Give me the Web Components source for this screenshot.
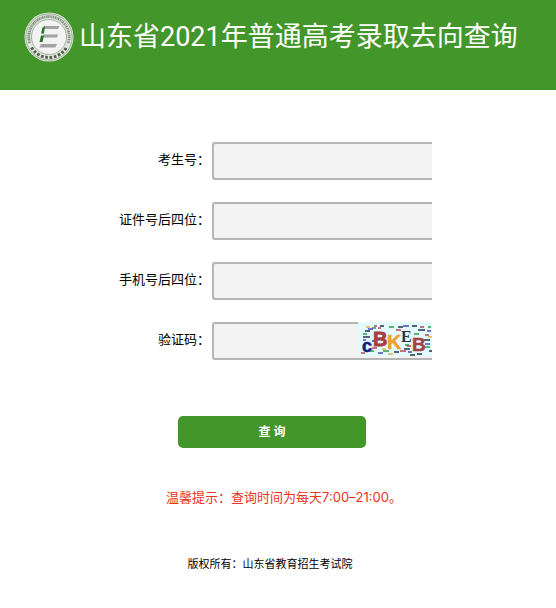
<!DOCTYPE html>
<html lang="zh-CN">
<head>
<meta charset="UTF-8">
<meta name="viewport" content="width=device-width, initial-scale=1">
<title>山东省2021年普通高考录取去向查询</title>
<style>
  body {
    margin: 0;
    background: #fff;
    color: #000;
    font-family: Inter, "Noto Sans CJK SC", sans-serif;
    font-size: 13px;
    line-height: 20px;
  }
</style>
</head>
<body>
<query-page></query-page>

<script>
class SiteLogo extends HTMLElement {
  connectedCallback() {
    this.attachShadow({ mode: 'open' });
    this.shadowRoot.innerHTML = `
      <style>
        :host {
          display: block;
          flex: none;
          width: 50px;
          height: 50px;
        }
        svg {
          display: block;
          width: 100%;
          height: 100%;
        }
      </style>
      <svg viewBox="0 0 50 50" aria-hidden="true">
        <circle cx="25" cy="25" r="24.5" fill="#dfe6dc"/>
        <circle cx="25" cy="25" r="23.2" fill="none" stroke="#8fa189" stroke-width=".8"/>
        <path d="M5.800 31A20.200 20.200 0 1 1 44.200 31" fill="none" stroke="#81917c" stroke-width="2.800" stroke-dasharray="1.300 .6 .8 .5 1.600 .7"/>
        <path d="M7.500 35.500A20.400 20.400 0 0 0 42.500 35.500" fill="none" stroke="#56604f" stroke-width="3" stroke-dasharray="2.600 1.700"/>
        <circle cx="25" cy="25" r="17.500" fill="#f3f3f3" stroke="#a5b39f" stroke-width="1"/>
        <path d="M20.500 14H35.500L34 17H19.800ZM19.500 22.500H34L33 25.500H19ZM17 32H33L31.500 35.500H15.500Z" fill="#a2a2a2"/>
        <path d="M18.500 15.500L21 14L20 21.500H17ZM17 23.500H20L18.500 30H15.500Z" fill="#27752c"/>
      </svg>
    `;
  }
}

class SiteHeader extends HTMLElement {
  connectedCallback() {
    this.attachShadow({ mode: 'open' });
    this.shadowRoot.innerHTML = `
      <style>
        :host {
          display: block;
          box-sizing: border-box;
          min-height: 90px;
          padding: 12px 24px;
          background: #43962a;
          color: #fff;
        }
        header {
          display: flex;
          align-items: center;
          gap: 5px;
        }
        h1 {
          margin: 0;
          font-family: Roboto, "Noto Sans CJK SC", sans-serif;
          font-size: 27px;
          font-weight: 400;
          line-height: 50px;
          white-space: nowrap;
        }
      </style>
      <header>
        <site-logo></site-logo>
        <h1><slot></slot></h1>
      </header>
    `;
  }
}

class CaptchaImage extends HTMLElement {
  connectedCallback() {
    this.attachShadow({ mode: 'open' });
    this.shadowRoot.innerHTML = `
      <style>
        :host {
          display: block;
          width: 74px;
          height: 34px;
        }
        svg {
          display: block;
          width: 100%;
          height: 100%;
          font-family: "Liberation Sans", sans-serif;
          font-weight: 700;
        }
        .serif {
          font-family: "Liberation Serif", serif;
        }
      </style>
      <svg viewBox="0 0 74 34" role="img" aria-label="验证码图片">
        <rect width="74" height="34" fill="#e3fbfd"/>
        <g fill="none" stroke-width="1.300">
          <path stroke="#243048" d="M7 9h5M22 4h4M54 4h5M5 15h7M60 8h7M46 27h6M66 18h6M36 30h5M52 33h5M59 32h5M71 29h3M40 5h5"/>
          <path stroke="#2f9a4a" d="M14 6h4M31 5h5M5 12h4M56 12h5M25 29h6M66 25h6M47 23h4M12 29h4M70 5h3"/>
          <path stroke="#c04058" d="M16 4h3M38 8h5M14 26h5M49 24h4M67 13h4M42 29h6M3 31h4M62 5h4M20 6h3"/>
          <path stroke="#4c44c8" d="M10 7h5M45 4h6M14 19h4M50 30h4M67 22h5M20 31h5M5 18h3M69 9h4"/>
          <path stroke="#e0b04c" d="M24 27h4M70 15h4M8 5h4M30 32h5"/>
        </g>
        <text x="4" y="30" font-size="18" fill="#151b80" stroke="#151b80" stroke-width=".6">c</text>
        <text x="15" y="24" font-size="20" fill="#a83f42" stroke="#a83f42" stroke-width=".8">B</text>
        <text x="29" y="27" font-size="20" fill="#f0a02c" stroke="#f0a02c" stroke-width=".5">K</text>
        <text class="serif" x="43" y="20" font-size="16" fill="#263746">E</text>
        <text x="54" y="29" font-size="19" fill="#a83f42" stroke="#a83f42" stroke-width=".5">B</text>
      </svg>
    `;
  }
}

class FormField extends HTMLElement {
  connectedCallback() {
    const label = this.getAttribute('label');
    const name = this.getAttribute('name');
    this.attachShadow({ mode: 'open' });
    this.shadowRoot.innerHTML = `
      <style>
        :host {
          display: grid;
          grid-template-columns: 212fr 220fr 124fr;
        }
        label {
          padding-right: 2px;
          line-height: 34px;
          text-align: right;
        }
        .box {
          position: relative;
          display: flex;
          min-width: 0;
        }
        input {
          box-sizing: border-box;
          width: 100%;
          height: 38px;
          margin: 0;
          padding: 0 8px;
          border: 2px solid #b5b5b5;
          border-right: 0;
          border-radius: 3px 0 0 3px;
          background: #f3f3f3;
          font: inherit;
          outline: none;
        }
        ::slotted(*) {
          position: absolute;
          top: 0;
          right: 0;
        }
      </style>
      <label for="${name}">${label}</label>
      <div class="box">
        <input type="text" id="${name}" name="${name}" autocomplete="off">
        <slot></slot>
      </div>
    `;
  }
}

class QueryPage extends HTMLElement {
  connectedCallback() {
    this.attachShadow({ mode: 'open' });
    this.shadowRoot.innerHTML = `
      <style>
        :host {
          display: block;
        }
        form {
          display: flex;
          flex-direction: column;
          gap: 22px;
          padding-top: 52px;
        }
        .actions {
          display: flex;
          justify-content: center;
          padding: 34px 12px 0 0;
        }
        button {
          width: 188px;
          height: 32px;
          padding: 0;
          border: 0;
          border-radius: 5px;
          background: #43962a;
          color: #fff;
          font: inherit;
          font-size: 12px;
          font-weight: 700;
          cursor: pointer;
        }
        p {
          margin: 0;
          text-align: center;
        }
        .tip {
          padding: 39px 0 0 12px;
          color: #ea3323;
        }
        .copyright {
          padding: 47px 16px 32px 0;
          font-size: 11px;
        }
      </style>
      <site-header>山东省2021年普通高考录取去向查询</site-header>
      <main>
        <form>
          <form-field label="考生号：" name="ksh"></form-field>
          <form-field label="证件号后四位：" name="sfzh"></form-field>
          <form-field label="手机号后四位：" name="sjh"></form-field>
          <form-field label="验证码：" name="yzm"><captcha-image></captcha-image></form-field>
          <div class="actions"><button type="button">查 询</button></div>
        </form>
        <p class="tip">温馨提示：查询时间为每天7:00–21:00。</p>
      </main>
      <footer><p class="copyright">版权所有：山东省教育招生考试院</p></footer>
    `;
  }
}

customElements.define('site-logo', SiteLogo);
customElements.define('site-header', SiteHeader);
customElements.define('captcha-image', CaptchaImage);
customElements.define('form-field', FormField);
customElements.define('query-page', QueryPage);
</script>
</body>
</html>
